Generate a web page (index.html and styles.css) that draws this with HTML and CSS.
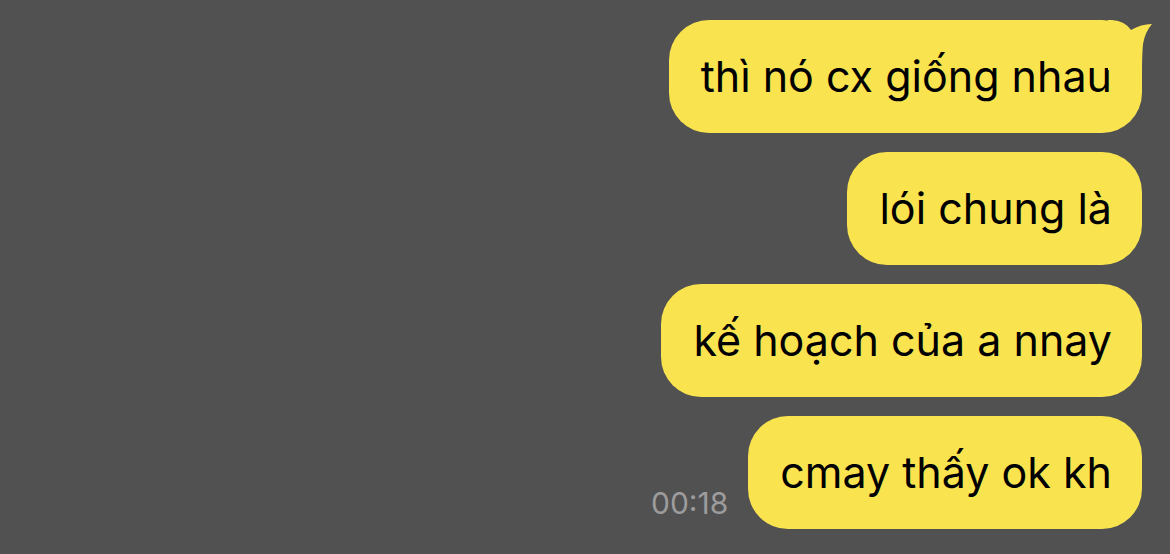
FILE: index.html
```html
<!DOCTYPE html>
<html lang="vi">
<head>
  <meta charset="UTF-8" />
  <title>Chat</title>
  <link rel="stylesheet" href="styles.css">
</head>
<body>
  <div class="chat">
    <div class="row">
      <div class="bubble first">
        thì nó cx giống nhau
        <svg class="tail" width="45" height="50" viewBox="0 0 45 50">
          <path d="M0 0 L4 0 Q17 1 23 10 Q33 4 44 4 Q37 12 35 24 Q34 35 34 50 L0 50 Z" fill="#f9e450"/>
        </svg>
      </div>
    </div>
    <div class="row">
      <div class="bubble">lói chung là</div>
    </div>
    <div class="row">
      <div class="bubble">kế hoạch của a nnay</div>
    </div>
    <div class="row">
      <span class="time">00:18</span>
      <div class="bubble">cmay thấy ok kh</div>
    </div>
  </div>
</body>
</html>
```

FILE: styles.css
```css
body {
  margin: 0;
  background-color: #525152;
  font-family: Inter, "Noto Sans", sans-serif;
}
.chat {
  display: flex;
  flex-direction: column;
  align-items: flex-end;
  gap: 19px;
  padding: 20px 28px 0 0;
}
.row {
  display: flex;
  align-items: flex-end;
  gap: 20px;
}
.bubble {
  position: relative;
  display: flex;
  align-items: center;
  height: 113px;
  box-sizing: border-box;
  padding: 0 30px 2px 32px;
  background-color: #f9e450;
  color: #000;
  font-size: 43px;
  border-radius: 40px;
  white-space: nowrap;
}
.tail {
  position: absolute;
  top: 0;
  right: -11px;
}
.time {
  color: #9d9c9d;
  font-size: 30px;
  line-height: 1;
  padding-bottom: 11px;
}
```
